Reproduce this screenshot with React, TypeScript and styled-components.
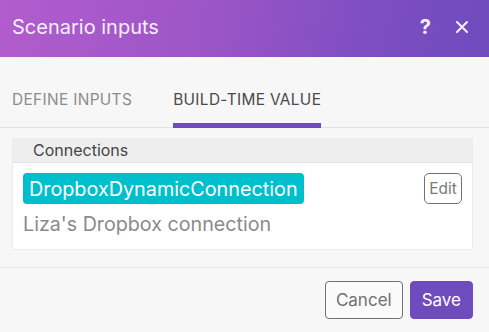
import React, { useState } from "react";
import styled, { createGlobalStyle } from "styled-components";

const GlobalStyle = createGlobalStyle`
  html, body { margin: 0; padding: 0; }
  body {
    background: #f7f7f7;
    font-family: Inter, "Noto Sans", sans-serif;
    -webkit-font-smoothing: antialiased;
  }
`;

const Dialog = styled.div`
  width: 489px;
  height: 332px;
  display: flex;
  flex-direction: column;
  background: #f7f7f7;
  overflow: hidden;
`;

const Header = styled.div`
  height: 57px;
  flex: none;
  display: flex;
  align-items: center;
  padding: 0 21px 0 12px;
  background: linear-gradient(100deg, #b25ccd 0%, #9a55c6 45%, #7d4ec2 75%, #6f4bbd 100%);
  color: #f6eefb;
`;

const Title = styled.h1`
  flex: 1;
  margin: 0;
  font-size: 20px;
  font-weight: 400;
  padding-bottom: 4px;
`;

const HeaderIcons = styled.div`
  display: flex;
  align-items: center;
  gap: 25px;
  padding-bottom: 4px;
`;

const HelpIcon = styled.span`
  font-size: 20px;
  font-weight: 700;
  line-height: 1;
`;

const Tabs = styled.div`
  height: 70px;
  flex: none;
  display: flex;
  align-items: flex-end;
  gap: 41px;
  padding: 0 12px;
  border-bottom: 1px solid #e2e2e2;
`;

const Tab = styled.div<{ $active?: boolean }>`
  font-size: 15.4px;
  letter-spacing: 0.35px;
  text-transform: uppercase;
  color: ${(p) => (p.$active ? "#4a4a4a" : "#8c8c8c")};
  padding-bottom: 14px;
  border-bottom: 5px solid ${(p) => (p.$active ? "#6f4cbd" : "transparent")};
  margin-bottom: -1px;
  cursor: pointer;
`;

const Body = styled.div`
  flex: 1;
  padding: 10px 16px 0 12px;
`;

const Panel = styled.div`
  border: 1px solid #ebebeb;
  border-top: none;
  background: #fff;
`;

const PanelHeader = styled.div`
  height: 24px;
  display: flex;
  align-items: center;
  padding-left: 20px;
  background: #eeeeef;
  border-bottom: 1px solid #e3e3e3;
  font-size: 16px;
  color: #454545;
`;

const PanelRow = styled.div`
  display: flex;
  align-items: flex-start;
  justify-content: space-between;
  padding: 10px 10px 0 10px;
  height: 76px;
`;

const RowText = styled.div`
  display: flex;
  flex-direction: column;
  gap: 8px;
`;

const Badge = styled.span`
  align-self: flex-start;
  height: 31px;
  display: flex;
  align-items: center;
  padding: 0 6px;
  border-radius: 4px;
  background: #00bfcc;
  color: #fff;
  font-size: 19.8px;
`;

const Description = styled.div`
  font-size: 19.7px;
  line-height: 24px;
  color: #8a8a8a;
`;

const SmallButton = styled.button`
  width: 38px;
  height: 31px;
  padding: 0;
  border: 1px solid #707070;
  border-radius: 5px;
  background: #fff;
  color: #7a7a7a;
  font-family: inherit;
  font-size: 15.5px;
`;

const Footer = styled.div`
  height: 65px;
  flex: none;
  display: flex;
  align-items: flex-start;
  justify-content: flex-end;
  gap: 7px;
  padding: 13px 16px 0 0;
  border-top: 1px solid #e8e8e8;
  box-sizing: border-box;
`;

const Button = styled.button<{ $primary?: boolean }>`
  height: 38px;
  padding: 0 ${(p) => (p.$primary ? "11px" : "10px")};
  border-radius: 4px;
  font-family: inherit;
  font-size: 17px;
  border: 1px solid ${(p) => (p.$primary ? "#6f4cbd" : "#707070")};
  background: ${(p) => (p.$primary ? "#6f4cbd" : "#fafafa")};
  color: ${(p) => (p.$primary ? "#fff" : "#707070")};
  cursor: pointer;
`;

export default function App() {
  const [tab, setTab] = useState(1);

  return (
    <>
      <GlobalStyle />
      <Dialog>
        <Header>
          <Title>Scenario inputs</Title>
          <HeaderIcons>
            <HelpIcon>?</HelpIcon>
            <svg width="12" height="12" viewBox="0 0 12 12">
              <path d="M1 1 L11 11 M11 1 L1 11" stroke="#f6eefb" strokeWidth="2" strokeLinecap="round" />
            </svg>
          </HeaderIcons>
        </Header>

        <Tabs>
          <Tab $active={tab === 0} onClick={() => setTab(0)}>Define inputs</Tab>
          <Tab $active={tab === 1} onClick={() => setTab(1)}>Build-time value</Tab>
        </Tabs>

        <Body>
          <Panel>
            <PanelHeader>Connections</PanelHeader>
            <PanelRow>
              <RowText>
                <Badge>DropboxDynamicConnection</Badge>
                <Description>Liza's Dropbox connection</Description>
              </RowText>
              <SmallButton>Edit</SmallButton>
            </PanelRow>
          </Panel>
        </Body>

        <Footer>
          <Button>Cancel</Button>
          <Button $primary>Save</Button>
        </Footer>
      </Dialog>
    </>
  );
}
